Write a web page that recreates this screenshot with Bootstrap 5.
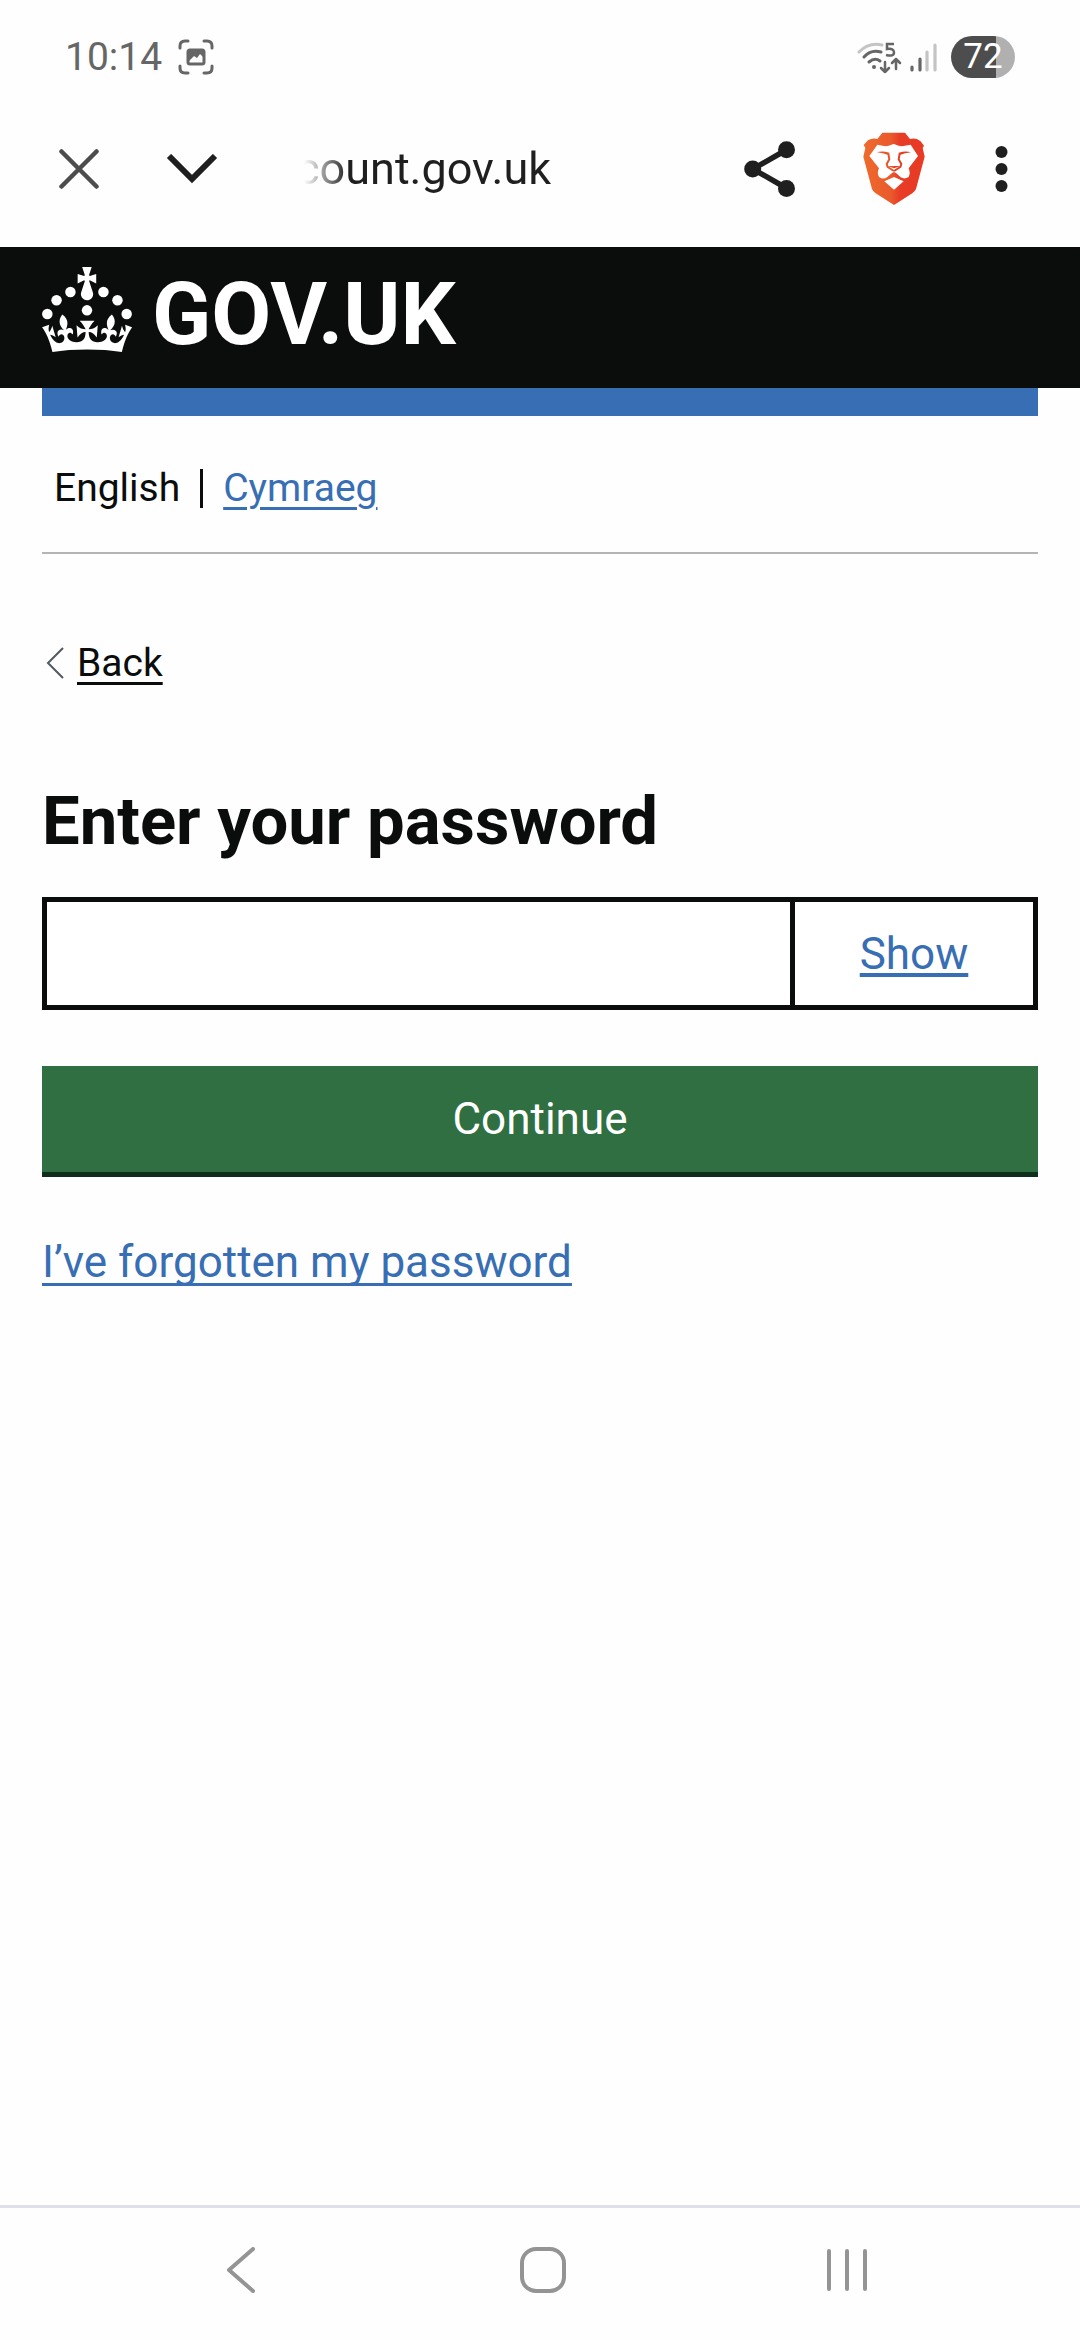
<!DOCTYPE html>
<html lang="en">
<head>
<meta charset="utf-8">
<meta name="viewport" content="width=device-width, initial-scale=1">
<title>Enter your password - GOV.UK</title>
<link href="https://cdn.jsdelivr.net/npm/bootstrap@5.3.0/dist/css/bootstrap.min.css" rel="stylesheet">
<style>
  :root { --ink: #0b0c0c; --link: #386eb3; --edge: 42px; }
  body { font-family: Roboto, "Liberation Sans", sans-serif; color: var(--ink); background: #fefefe; }
  svg { display: block; flex: none; }
  .edge { padding-left: var(--edge); padding-right: var(--edge); }

  .status { padding: 36px 65px 12px; color: #666; }
  .clock { font-size: 39px; line-height: 42px; }
  .battery { width: 64px; height: 42px; margin-left: 13px; border-radius: 21px; font-size: 35px; line-height: 42px; color: #fff;
    background: linear-gradient(to right, #4d4d4d 45px, #b0b0b0 45px); }

  .toolbar { height: 157px; padding: 0 72px 0 59px; color: #1f1f1f; }
  .tool { padding: 0; border: 0; background: none; color: inherit; }
  .tool-page { margin-left: 67px; }
  .tool-shields { margin-left: 67px; }
  .tool-menu { margin-left: 70px; }
  .address { margin-left: 78px; font-size: 45px; line-height: 60px;
    -webkit-mask-image: linear-gradient(to right, transparent 8px, #000 52px);
    mask-image: linear-gradient(to right, transparent 8px, #000 52px); }

  .masthead { height: 141px; padding-top: 20px; background: var(--ink); }
  .wordmark { font-size: 87px; line-height: 84px; font-weight: 700; color: #fff; margin-left: 20px; padding-top: 4px; }
  .masthead svg { margin-bottom: 4px; }
  .blue-bar { height: 28px; background: var(--link); }

  .small-copy { font-size: 39px; line-height: 48px; }
  .languages { padding: 48px 12px 40px; border-bottom: 2px solid #b3b4b5; }
  .languages li + li { border-left: 3px solid var(--ink); line-height: 39px; margin-left: 20px; padding-left: 20px; }
  .text-link { color: var(--link); text-decoration: underline; text-decoration-thickness: 3px; text-underline-offset: 6px; }
  .text-link.dark { color: var(--ink); text-decoration-skip-ink: none; margin-left: 13px; }
  .back { margin-top: 85px; padding-left: 4px; }

  h1 { font-size: 67px; line-height: 80px; font-weight: 700; margin: 94px 0 36px; }
  .body-copy { font-size: 44px; line-height: 56px; }
  .secret { height: 113px; }
  .secret .form-control { border: 5px solid var(--ink); border-right-width: 0; border-radius: 0; font-size: 44px; background: #fff; }
  .secret .btn { width: 248px; border: 5px solid var(--ink); border-radius: 0; color: var(--link); background: #fff; padding: 0; }
  .secret .btn span { text-decoration: underline; text-decoration-thickness: 4px; text-underline-offset: 4px; text-decoration-skip-ink: none; }
  .go { height: 106px; margin-top: 56px; border: 0; border-radius: 0; color: #fff; background: #2f6f42; box-shadow: 0 5px 0 #0f2e1b; }
  .forgot { margin-top: 62px; }
  .forgot .text-link { text-decoration-skip-ink: none; }

  .system-nav { height: 135px; border-top: 3px solid #dee2e8; padding: 0 213px 8px 227px; color: #949494; }
</style>
<script src="https://cdn.jsdelivr.net/npm/bootstrap@5.3.0/dist/js/bootstrap.bundle.min.js"></script>
</head>
<body class="d-flex flex-column min-vh-100">

<div class="status d-flex align-items-center">
  <span class="clock">10:14</span>
  <svg class="ms-3" width="36" height="36" viewBox="0 0 36 36" fill="none" stroke="currentColor" stroke-width="3" stroke-linecap="round">
    <path d="M2 9V7q0-5 5-5h3M26 2h3q5 0 5 5v2M34 27v2q0 5-5 5h-3M10 34H7q-5 0-5-5v-2"/>
    <rect x="10" y="11" width="16" height="14" rx="2"/>
    <path d="M10 11h16v8l-4-4-3 4-3-2-6 6z" fill="currentColor" stroke="none"/>
  </svg>
  <svg class="ms-auto" width="45" height="34" viewBox="0 0 45 34" fill="none" stroke="currentColor" stroke-width="3" stroke-linecap="round">
    <path d="M2 12Q12 2 25 5" stroke="#c4c4c4"/>
    <path d="M7 17Q14 9 24 12M12 22q6-5 11-1"/>
    <circle cx="17" cy="27" r="2" fill="currentColor" stroke="none"/>
    <path d="M28 22v10m-4-4 4 4 4-4M39 29V19m-4 4 4-4 4 4" stroke-linejoin="round" stroke-width="2.500"/>
    <path d="M37 4h-7v5q7-1 7 3.500T29 15" stroke-width="2.500" stroke-linecap="butt"/>
  </svg>
  <svg width="28" height="34" viewBox="0 0 28 34" fill="none" stroke="currentColor" stroke-width="3.200" stroke-linecap="round" class="ms-2">
    <path d="M2 27v3M10 19v11"/><path d="M17 12v18M25 5v25" stroke="#c4c4c4"/>
  </svg>
  <span class="battery text-center">72</span>
</div>

<div class="toolbar d-flex align-items-center">
  <button class="tool" type="button" aria-label="Close"><svg width="40" height="40" viewBox="0 0 40 40" fill="none" stroke="#4c4c4c" stroke-width="4.500" stroke-linecap="round"><path d="m2.500 2.500 35 35m0-35-35 35"/></svg></button>
  <button class="tool tool-page" type="button" aria-label="Page details"><svg width="52" height="30" viewBox="0 0 52 30" fill="none" stroke="currentColor" stroke-width="6"><path d="m3 2 23 23L49 2"/></svg></button>
  <div class="address">count.gov.uk</div>
  <button class="tool ms-auto" type="button" aria-label="Share"><svg width="52" height="56" viewBox="0 0 52 56" fill="currentColor"><path d="M43 8.500 9 28l34 19.500" fill="none" stroke="currentColor" stroke-width="5.500"/><circle cx="8.700" cy="28" r="8.500"/><circle cx="42.500" cy="8.700" r="8.500"/><circle cx="42.500" cy="47.500" r="8.500"/></svg></button>
  <button class="tool tool-shields" type="button" aria-label="Brave Shields"><svg width="62" height="73" viewBox="490 65 186 219">
    <defs><linearGradient id="mane" x1="0" x2="1"><stop offset="0" stop-color="#ef6a2c"/><stop offset=".45" stop-color="#e95a2c"/><stop offset=".6" stop-color="#e73c26"/><stop offset="1" stop-color="#e83a24"/></linearGradient></defs>
    <path fill="url(#mane)" d="M548 67h68l15 19q17-4 31 6l11 14-4 7 6 26-26 97q-4 8-11 13l-55 35-55-35q-8-5-11-13l-26-97 6-26-5-9 13-14q13-8 28-4z"/>
    <path fill="#fff" d="M583 101q14 8 28 6l22-4 22 34-28 37q6 13 0 26-12 8-24 1l-13-12-7-4-7 4-14 12q-12 8-24-1-7-13 0-26l-29-37 24-34 20 4q14 2 28-6z"/>
    <path fill="#fff" d="m583 200 29 13-29 25-29-25z"/>
    <g fill="none" stroke-width="6" stroke-linejoin="round">
      <path stroke="#e9552b" d="M566 129l3 18-8 14 3 9 19 12"/>
      <path stroke="#e73c26" d="M600 129l-3 18 8 14-3 9-19 12"/>
    </g>
    <path fill="#e9552b" d="M532 126q16-5 37 1l-3 7q-16-6-34-8zM563 167h20v7z"/>
    <path fill="#e73c26" d="M634 126q-16-5-37 1l3 7q16-6 34-8zM603 167h-20v7z"/>
  </svg></button>
  <button class="tool tool-menu" type="button" aria-label="Menu"><svg width="13" height="48" viewBox="0 0 13 48" fill="currentColor"><circle cx="6.500" cy="7" r="6"/><circle cx="6.500" cy="24" r="6"/><circle cx="6.500" cy="41" r="6"/></svg></button>
</div>

<header>
  <div class="masthead edge">
    <a href="#" class="d-flex align-items-center text-decoration-none">
      <svg width="90" height="85" viewBox="0 0 63.400 60" fill="#fff"><circle cx="20" cy="17.600" r="3.700"/><circle cx="10.200" cy="23.500" r="3.700"/><circle cx="3.700" cy="33.200" r="3.700"/><circle cx="31.700" cy="30.600" r="3.700"/><circle cx="43.300" cy="17.600" r="3.700"/><circle cx="53.200" cy="23.500" r="3.700"/><circle cx="59.700" cy="33.200" r="3.700"/><path d="M33.1,9.8c.2-.1.3-.3.5-.5l4.6,2.4v-6.8l-4.6,1.5c-.1-.2-.3-.3-.5-.5l1.9-5.9h-6.7l1.9,5.9c-.2.1-.3.3-.5.5l-4.6-1.5v6.8l4.6-2.4c.1.2.3.3.5.5l-2.6,8c-.9,2.8,1.2,5.7,4.1,5.7h0c3,0,5.100-2.900,4.100-5.700l-2.600-8ZM37,37.9s-3.4,3.8-4.1,6.1c2.2,0,4.2-.5,6.4-2.8l-.7,8.5c-2-2.8-4.4-4.1-5.7-3.8.1,3.1.5,6.7,5.8,7.2,3.7.3,6.7-1.5,7-3.8.4-2.6-2-4.3-3.7-1.6-1.4-4.5,2.4-6.1,4.9-3.2-1.9-4.5-1.8-7.7,2.4-10.9,3,4,2.6,7.3-1.2,11.1,2.4-1.3,6.2,0,4,4.6-1.2-2.8-3.7-2.2-4.2.2-.3,1.7.7,3.7,3,4.2,1.9.3,4.7-.9,7-5.9-1.3,0-2.4.7-3.9,1.7l2.4-8c.6,2.3,1.4,3.7,2.2,4.5.6-1.6.5-2.8,0-5.3l5,1.8c-2.6,3.6-5.2,8.7-7.3,17.5-7.4-1.1-15.7-1.7-24.5-1.7h0c-8.8,0-17.1.6-24.5,1.7-2.1-8.9-4.7-13.9-7.3-17.5l5-1.8c-.5,2.5-.6,3.7,0,5.3.8-.8,1.6-2.3,2.2-4.5l2.4,8c-1.5-1-2.6-1.7-3.9-1.7,2.3,5,5.2,6.2,7,5.9,2.3-.4,3.3-2.4,3-4.2-.5-2.4-3-3.1-4.2-.2-2.2-4.6,1.6-6,4-4.6-3.7-3.7-4.2-7.1-1.2-11.1,4.2,3.2,4.3,6.4,2.4,10.9,2.5-2.8,6.3-1.3,4.9,3.2-1.8-2.7-4.1-1-3.7,1.6.3,2.3,3.3,4.1,7,3.8,5.4-.5,5.7-4.2,5.8-7.2-1.3-.2-3.7,1-5.7,3.8l-.7-8.5c2.2,2.3,4.2,2.7,6.4,2.8-.7-2.3-4.1-6.1-4.1-6.1h10.6,0Z"/></svg>
      <span class="wordmark">GOV.UK</span>
    </a>
  </div>
  <div class="edge"><div class="blue-bar"></div></div>
</header>

<main class="edge flex-grow-1">
  <nav class="languages small-copy" aria-label="Choose a language">
    <ul class="list-unstyled d-flex align-items-center mb-0">
      <li>English</li>
      <li><a class="text-link" href="#" lang="cy">Cymraeg</a></li>
    </ul>
  </nav>

  <div class="back small-copy d-flex align-items-center">
    <svg width="18" height="32" viewBox="0 0 18 32" fill="none" stroke="#505a5f" stroke-width="2"><path d="M17 1 2 16l15 15"/></svg>
    <a class="text-link dark" href="#">Back</a>
  </div>

  <form onsubmit="return false">
    <h1><label for="password">Enter your password</label></h1>
    <div class="secret input-group flex-nowrap">
      <input class="form-control" id="password" type="password" autocomplete="current-password">
      <button class="btn body-copy" type="button"><span>Show</span></button>
    </div>
    <button class="btn go body-copy w-100" type="submit">Continue</button>
  </form>
  <p class="forgot body-copy mb-0"><a class="text-link" href="#">I’ve forgotten my password</a></p>
</main>

<nav class="system-nav d-flex justify-content-between align-items-center" aria-label="System">
  <button class="tool" type="button" aria-label="Back"><svg width="28" height="46" viewBox="0 0 28 46" fill="none" stroke="currentColor" stroke-width="4" stroke-linecap="round" stroke-linejoin="round"><path d="M26 2 2 23l24 21"/></svg></button>
  <button class="tool ms-1" type="button" aria-label="Home"><svg width="46" height="46" viewBox="0 0 46 46" fill="none" stroke="currentColor" stroke-width="4"><rect x="2" y="2" width="42" height="42" rx="14"/></svg></button>
  <button class="tool" type="button" aria-label="Recent apps"><svg width="40" height="42" viewBox="0 0 40 42" fill="none" stroke="currentColor" stroke-width="4" stroke-linecap="round"><path d="M2 2v38M20 2v38M38 2v38"/></svg></button>
</nav>
</body>
</html>
